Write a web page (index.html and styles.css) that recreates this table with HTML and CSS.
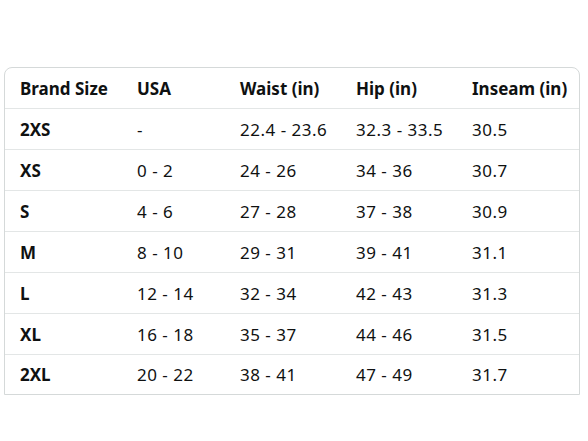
FILE: index.html
```html
<!DOCTYPE html>
<html>
<head>
<meta charset="utf-8">
<link rel="stylesheet" href="styles.css">
</head>
<body>
<div class="wrap">
<table class="size-table">
<colgroup>
<col class="c1"><col class="c2"><col class="c3"><col class="c4"><col class="c5">
</colgroup>
<thead>
<tr><th>Brand Size</th><th>USA</th><th>Waist (in)</th><th>Hip (in)</th><th>Inseam (in)</th></tr>
</thead>
<tbody>
<tr><th>2XS</th><td>-</td><td>22.4 - 23.6</td><td>32.3 - 33.5</td><td>30.5</td></tr>
<tr><th>XS</th><td>0 - 2</td><td>24 - 26</td><td>34 - 36</td><td>30.7</td></tr>
<tr><th>S</th><td>4 - 6</td><td>27 - 28</td><td>37 - 38</td><td>30.9</td></tr>
<tr><th>M</th><td>8 - 10</td><td>29 - 31</td><td>39 - 41</td><td>31.1</td></tr>
<tr><th>L</th><td>12 - 14</td><td>32 - 34</td><td>42 - 43</td><td>31.3</td></tr>
<tr><th>XL</th><td>16 - 18</td><td>35 - 37</td><td>44 - 46</td><td>31.5</td></tr>
<tr class="last"><th>2XL</th><td>20 - 22</td><td>38 - 41</td><td>47 - 49</td><td>31.7</td></tr>
</tbody>
</table>
</div>
</body>
</html>
```
FILE: styles.css
```css
html, body { margin: 0; padding: 0; background: #fff; }
body { font-family: "Noto Sans", "Open Sans", sans-serif; color: #0f1111; }
.wrap {
  margin: 67px 0 0 4px;
  width: 574px;
  border: 1px solid #d5d9d9;
  border-radius: 8px 8px 0 0;
  overflow: hidden;
}
.size-table { border-collapse: collapse; width: 100%; table-layout: fixed; font-size: 17px; }
.c1 { width: 117px; }
.c2 { width: 103px; }
.c3 { width: 116px; }
.c4 { width: 116px; }
.c5 { width: auto; }
.size-table th, .size-table td {
  height: 40px;
  padding: 0 0 0 15px;
  text-align: left;
  vertical-align: middle;
  white-space: nowrap;
  border-top: 1px solid #e3e6e6;
}
.size-table thead th { border-top: none; }
.size-table th { font-weight: 700; }
.size-table td { font-weight: 400; letter-spacing: 0.5px; }
.size-table .last th, .size-table .last td { height: 39px; }
```
